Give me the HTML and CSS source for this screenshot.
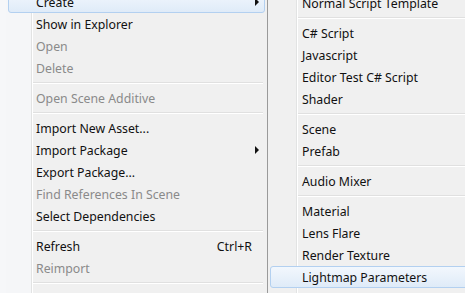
FILE: index.html
```html
<!DOCTYPE html>
<html>
<head>
<meta charset="utf-8">
<link rel="stylesheet" href="styles.css">
</head>
<body>
<div class="screen">
  <div class="menu menu-left">
    <div class="item hl"><span class="label">Create</span><span class="arrow"></span></div>
    <div class="item"><span class="label">Show in Explorer</span></div>
    <div class="item off"><span class="label">Open</span></div>
    <div class="item off"><span class="label">Delete</span></div>
    <div class="sep"></div>
    <div class="item off"><span class="label">Open Scene Additive</span></div>
    <div class="sep"></div>
    <div class="item"><span class="label">Import New Asset...</span></div>
    <div class="item"><span class="label">Import Package</span><span class="arrow"></span></div>
    <div class="item"><span class="label">Export Package...</span></div>
    <div class="item off"><span class="label">Find References In Scene</span></div>
    <div class="item"><span class="label">Select Dependencies</span></div>
    <div class="sep"></div>
    <div class="item"><span class="label">Refresh</span><span class="key">Ctrl+R</span></div>
    <div class="item off"><span class="label">Reimport</span></div>
    <div class="sep"></div>
    <div class="item empty"></div>
  </div>
  <div class="menu menu-right">
    <div class="item"><span class="label">Normal Script Template</span></div>
    <div class="sep"></div>
    <div class="item"><span class="label">C# Script</span></div>
    <div class="item"><span class="label">Javascript</span></div>
    <div class="item"><span class="label">Editor Test C# Script</span></div>
    <div class="item"><span class="label">Shader</span></div>
    <div class="sep"></div>
    <div class="item"><span class="label">Scene</span></div>
    <div class="item"><span class="label">Prefab</span></div>
    <div class="sep"></div>
    <div class="item"><span class="label">Audio Mixer</span></div>
    <div class="sep"></div>
    <div class="item"><span class="label">Material</span></div>
    <div class="item"><span class="label">Lens Flare</span></div>
    <div class="item"><span class="label">Render Texture</span></div>
    <div class="item hl"><span class="label">Lightmap Parameters</span></div>
    <div class="item empty"></div>
  </div>
</div>
</body>
</html>
```

FILE: styles.css
```css
html, body {
  margin: 0;
  padding: 0;
}
body {
  background: #f6f7f9;
  overflow: hidden;
  font-family: "Noto Sans", "Open Sans", sans-serif;
  font-size: 12.3px;
  color: #111;
}
.screen {
  display: flex;
  align-items: flex-start;
  height: 293px;
  overflow: hidden;
}
.menu {
  box-sizing: border-box;
  padding: 0 2px;
  flex: none;
}
.menu-left {
  margin-left: 6px;
  margin-top: -9px;
  width: 262px;
  border-right: 1px solid #9a9a9a;
  background: linear-gradient(to right, #f5f6f8 0 25px, #e2e3e3 25px 26px, #ffffff 26px 27px, #f0f0f0 27px);
}
.menu-right {
  margin-top: -8px;
  width: 230px;
  background: linear-gradient(to right, #f0f0f0 0 28px, #e2e3e3 28px 29px, #ffffff 29px 30px, #f0f0f0 30px);
}
.item {
  box-sizing: border-box;
  height: 22px;
  display: flex;
  align-items: center;
  padding-right: 5px;
  border: 1px solid transparent;
  border-radius: 3px;
}
.menu-left .item {
  padding-left: 27px;
}
.menu-right .item {
  padding-left: 31px;
}
.item.hl {
  background: linear-gradient(#f2f7fd, #dfebf8);
  border-color: #b3d0f0;
}
.item.off {
  color: #8a8a8a;
}
.label {
  white-space: nowrap;
}
.arrow {
  margin-left: auto;
  width: 0;
  height: 0;
  border-top: 4px solid transparent;
  border-bottom: 4px solid transparent;
  border-left: 4px solid #111;
}
.key {
  margin-left: auto;
  margin-right: 7px;
}
.sep {
  height: 8px;
  display: flex;
  align-items: center;
}
.sep::before {
  content: "";
  flex: 1;
  height: 0;
  border-top: 1px solid #e0e0e0;
  border-bottom: 1px solid #ffffff;
}
.menu-left .sep::before {
  margin-left: 25px;
  margin-right: 2px;
}
.menu-right .sep::before {
  margin-left: 28px;
}
```
